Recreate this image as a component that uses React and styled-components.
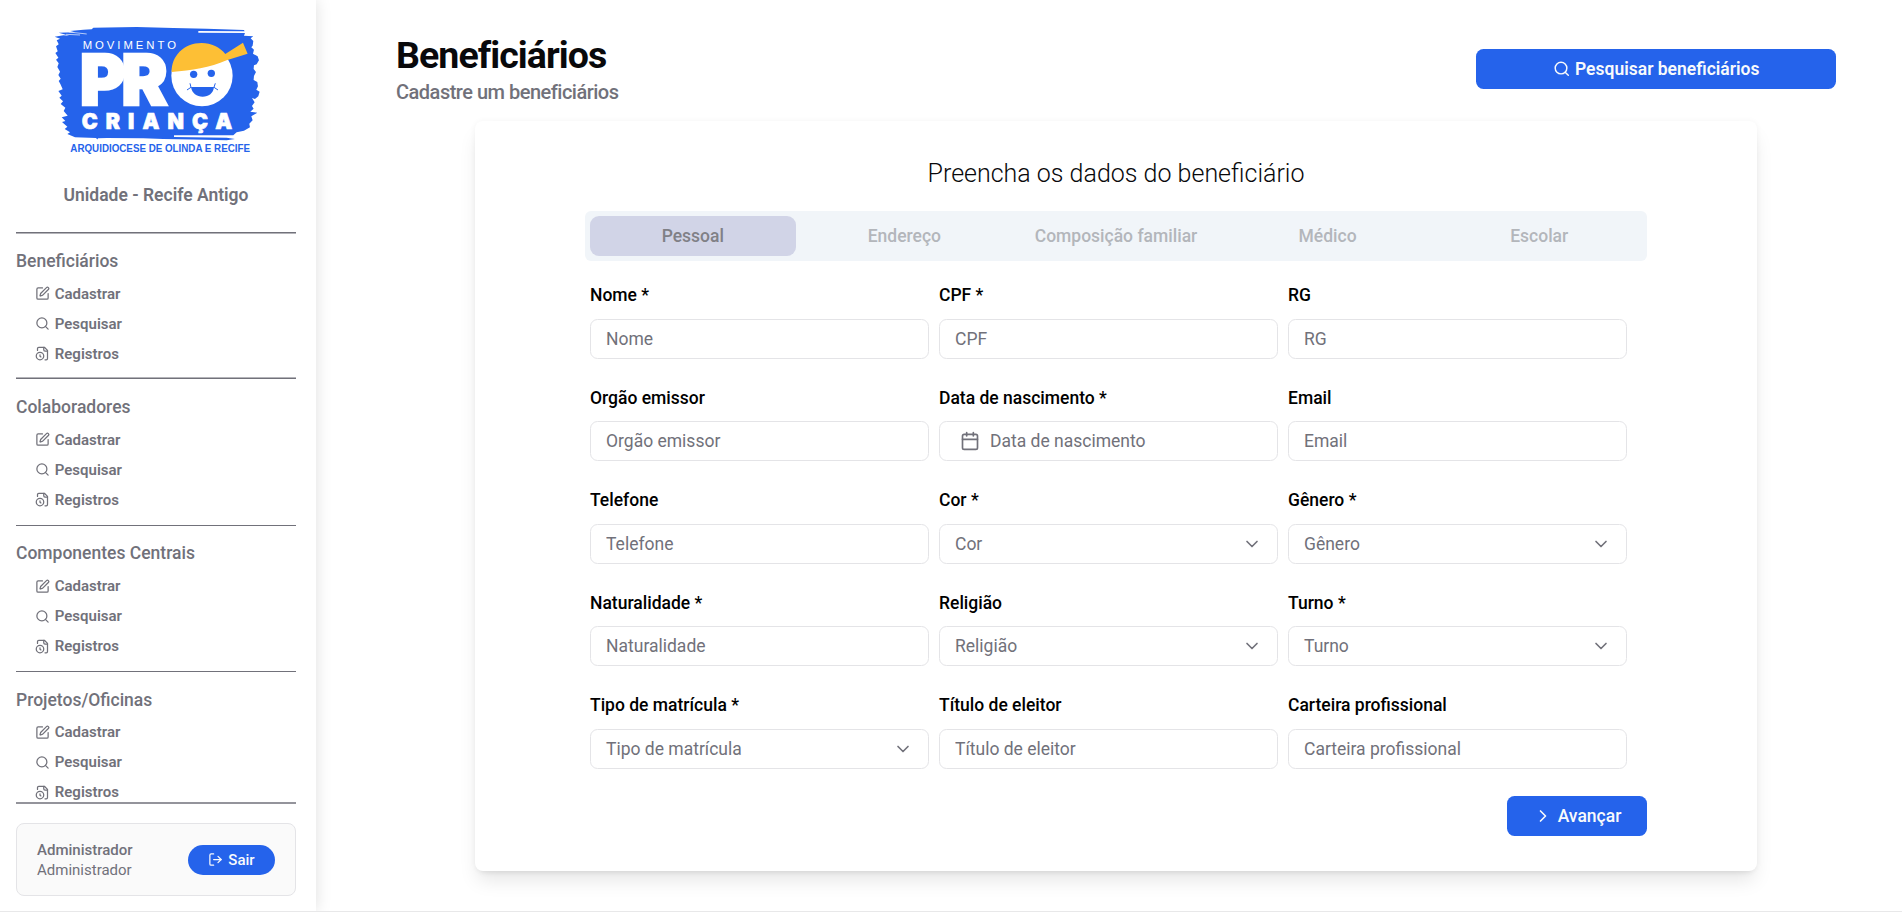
import React from "react";
import styled, { createGlobalStyle, css } from "styled-components";
import { SquarePen, Search, LogOut, Calendar, ChevronDown, ChevronRight } from "lucide-react";

const GlobalStyle = createGlobalStyle`
  * { box-sizing: border-box; }
  html, body { height: 100%; overflow: hidden; }
  body { margin: 0; background: #fff; color: #09090b; font-family: Roboto, "Liberation Sans", sans-serif; }
  button, input { font-family: inherit; }
  h1, h2, p { margin: 0; }
`;

const Page = styled.div`
  display: flex;
  height: 912px;
  border-bottom: 1px solid #e8e8e9;
`;

const Sidebar = styled.aside`
  display: flex;
  flex-direction: column;
  flex: none;
  width: 316px;
  padding: 15px 20px 15px 16px;
  color: #71717a;
  box-shadow: 0 0 15px rgba(0, 0, 0, 0.13);
  clip-path: inset(0 -30px 0 0);
`;

const LogoSvg = styled.svg`
  display: block;
  width: 240px;
  height: 140px;
  margin-left: 24px;
`;

const Unit = styled.p`
  margin-top: 26px;
  line-height: 28px;
  font-size: 17.5px;
  font-weight: 600;
  text-align: center;
`;

const Nav = styled.nav`
  display: flex;
  flex-direction: column;
  height: 572px;
  margin-top: 23.25px;
  overflow: hidden;
  border-bottom: 2px solid #94949b;
`;

const NavSection = styled.section`
  flex: none;
  height: 146.25px;
  padding-top: 12.75px;
  border-top: 1px solid #71717a;
  &:nth-child(1) { box-shadow: inset 0 1px #b4b4b9; }
  &:nth-child(2) { box-shadow: 0 -1px #b4b4b9; }
`;

const NavTitle = styled.h2`
  line-height: 30px;
  margin-bottom: 2.75px;
  font-size: 17.5px;
  font-weight: 500;
`;

const NavItem = styled.a`
  display: flex;
  align-items: center;
  gap: 4.5px;
  height: 30px;
  padding-left: 19.25px;
  font-size: 15px;
  font-weight: 600;
`;

const UserCard = styled.div`
  display: flex;
  align-items: center;
  justify-content: space-between;
  flex: none;
  height: 73px;
  margin-top: 19px;
  padding: 0 20px;
  border: 1px solid #e4e4e7;
  border-radius: 8px;
  background: #fafafa;
  font-size: 15px;
  line-height: 20px;
`;

const UserName = styled.div`
  font-weight: 500;
`;

const Button = styled.button`
  display: flex;
  align-items: center;
  justify-content: center;
  padding: 0;
  border: 0;
  border-radius: 7.5px;
  color: #f8fafc;
  background: #2563eb;
  height: 40px;
  font-size: 17.5px;
  font-weight: 500;
  ${(p) => p.$kind === "search" && css`width: 360px; gap: 5px; font-weight: 600;`}
  ${(p) => p.$kind === "next" && css`width: 140px; gap: 5px; align-self: flex-end; margin-top: 26px;`}
  ${(p) => p.$kind === "logout" && css`width: 87px; height: 30px; gap: 5px; border-radius: 15px; font-size: 15px;`}
`;

const Main = styled.main`
  flex: 1;
  display: flex;
  flex-direction: column;
  padding: 34px 66px 0 80px;
`;

const Header = styled.header`
  display: flex;
  align-items: center;
  justify-content: space-between;
  height: 70px;
`;

const Heading = styled.div`
  padding-top: 3px;
`;

const Title = styled.h1`
  line-height: 40px;
  font-size: 37.5px;
  font-weight: 700;
  letter-spacing: -0.025em;
`;

const Subtitle = styled.p`
  line-height: 30px;
  margin-top: 2px;
  font-size: 20px;
  font-weight: 500;
  letter-spacing: -0.025em;
  color: #71717a;
`;

const Card = styled.section`
  display: flex;
  flex-direction: column;
  flex: none;
  width: 1282px;
  height: 750.5px;
  margin: 16.5px 0 0 79px;
  padding: 36px 110px 0;
  border-radius: 8px;
  background: #fff;
  box-shadow: 0 12.5px 18.75px -3.75px rgba(0, 0, 0, 0.1), 0 5px 7.5px -5px rgba(0, 0, 0, 0.1), 0 0 6px rgba(0, 0, 0, 0.045);
`;

const CardTitle = styled.h2`
  line-height: 34px;
  font-size: 25px;
  font-weight: 300;
  text-align: center;
`;

const Tabs = styled.div`
  display: grid;
  grid-template-columns: repeat(5, 1fr);
  gap: 6px;
  height: 50px;
  margin-top: 20.5px;
  padding: 5px;
  border-radius: 6px;
  background: #f1f5f9;
`;

const Tab = styled.button`
  padding: 0;
  border: 0;
  border-radius: 9px;
  font-size: 17.5px;
  font-weight: 500;
  color: ${(p) => (p.$active ? "#808086" : "#b3b6bb")};
  background: ${(p) => (p.$active ? "#d1d4e7" : "transparent")};
`;

const Fields = styled.div`
  display: grid;
  grid-template-columns: repeat(3, 339px);
  column-gap: 10px;
  row-gap: 22.5px;
  margin: 19px 0 0 5px;
`;

const Field = styled.label`
  display: flex;
  flex-direction: column;
  gap: 8.5px;
  height: 80px;
`;

const FieldLabel = styled.span`
  line-height: 30px;
  font-size: 17.5px;
  font-weight: 500;
  color: #000;
`;

const Control = styled.span`
  display: flex;
  align-items: center;
  justify-content: space-between;
  flex: none;
  height: 40px;
  padding: 0 15px;
  border: 1px solid #e4e4e7;
  border-radius: 7.5px;
  font-size: 17.5px;
  color: #71717a;
  ${(p) => p.$date && css`justify-content: flex-start; gap: 10px; padding-left: 20px;`}
`;

const Input = styled.input`
  width: 100%;
  padding: 0;
  border: 0;
  outline: 0;
  background: transparent;
  font-size: 17.5px;
  &::placeholder { color: #71717a; opacity: 1; }
`;

const FileClock = () => (
  <svg width="15" height="15" viewBox="0 0 24 24" fill="none" stroke="currentColor" strokeWidth="2" strokeLinecap="round" strokeLinejoin="round">
    <path d="M16 22h2a2 2 0 0 0 2-2V7l-5-5H6a2 2 0 0 0-2 2v3" />
    <path d="M14 2v4a2 2 0 0 0 2 2h4" />
    <circle cx="8" cy="16" r="6" />
    <path d="M9.5 17.5 8 16.25V14" />
  </svg>
);

const Logo = () => (
  <LogoSvg viewBox="0 0 720 420" fontFamily="Liberation Sans, Arial, sans-serif">
    <path
      fill="#2563eb"
      d="M44 65 70 61 88 62 56 53 105 52 90 48 130 44 155 43 160 38 290 36 400 39 500 41 612 45 614 49 475 48 475 53 615 54 612 62 640 64 632 70 640 78 638 92 634 97 642 104 639 116 653 124 657 136 650 148 642 151 641 162 648 171 642 183 641 195 652 201 654 214 649 224 659 230 655 244 645 252 636 249 644 262 636 273 641 281 631 290 652 293 634 304 638 316 628 326 630 337 612 347 590 352 580 361 402 361 402 366 560 368 585 372 560 376 460 374 370 372 310 370 200 369 174 370 172 374 168 369 105 367 82 357 90 352 74 342 82 335 66 321 76 318 65 307 83 302 71 288 76 278 62 267 69 259 58 248 65 242 55 228 68 223 61 207 56 198 62 191 55 180 60 170 52 156 56 145 48 134 55 128 46 114 53 109 48 94 56 88 50 76 60 71Z"
    />
    <path stroke="#fff" strokeWidth="2" d="M78 58 120 60M86 51 140 57" />
    <g fill="#fff">
      <text x="128" y="102" fontSize="34" textLength="280" lengthAdjust="spacing">MOVIMENTO</text>
      <g fontFamily="Inter, Liberation Sans, sans-serif" fontWeight="900" stroke="#fff">
        <text x="119 244" y="270" fontSize="209" strokeWidth="7">PR</text>
        <text x="125" y="341" fontSize="64" strokeWidth="2" textLength="452" lengthAdjust="spacing">CRIANÇA</text>
      </g>
      <circle cx="486" cy="182" r="92" />
    </g>
    <path fill="#fdbf35" d="M395 171C394 124 431 84 485 84 514 84 540 97 556 117L609 83 623 116 560 136C510 158 455 167 395 171Z" />
    <g fill="#2563eb">
      <circle cx="461" cy="178" r="11" />
      <circle cx="514" cy="175" r="11" />
      <path d="M453 216H522C520 235 506 245 488 245S456 235 453 216Z" />
      <path fill="none" stroke="#2563eb" strokeWidth="3" d="M441 225 453 217 450 205M534 225 522 217 526 205" />
      <text x="91" y="411" fontSize="30" fontWeight="700" textLength="539" lengthAdjust="spacingAndGlyphs">ARQUIDIOCESE DE OLINDA E RECIFE</text>
    </g>
  </LogoSvg>
);

const sections = ["Beneficiários", "Colaboradores", "Componentes Centrais", "Projetos/Oficinas"];
const tabs = ["Pessoal", "Endereço", "Composição familiar", "Médico", "Escolar"];
const fields = [
  { name: "Nome", required: true },
  { name: "CPF", required: true },
  { name: "RG" },
  { name: "Orgão emissor" },
  { name: "Data de nascimento", required: true, type: "date" },
  { name: "Email" },
  { name: "Telefone" },
  { name: "Cor", required: true, type: "select" },
  { name: "Gênero", required: true, type: "select" },
  { name: "Naturalidade", required: true },
  { name: "Religião", type: "select" },
  { name: "Turno", required: true, type: "select" },
  { name: "Tipo de matrícula", required: true, type: "select" },
  { name: "Título de eleitor" },
  { name: "Carteira profissional" },
];

const FormField = ({ name, required, type }) => (
  <Field>
    <FieldLabel>{name}{required && " *"}</FieldLabel>
    <Control $date={type === "date"}>
      {type === "date" && <><Calendar size={20} strokeWidth={2} />{name}</>}
      {type === "select" && <>{name}<ChevronDown size={20} strokeWidth={2} /></>}
      {!type && <Input placeholder={name} />}
    </Control>
  </Field>
);

export default function App() {
  return (
    <>
      <GlobalStyle />
      <Page>
        <Sidebar>
          <Logo />
          <Unit>Unidade - Recife Antigo</Unit>
          <Nav>
            {sections.map((s) => (
              <NavSection key={s}>
                <NavTitle>{s}</NavTitle>
                <NavItem><SquarePen size={15} strokeWidth={2} />Cadastrar</NavItem>
                <NavItem><Search size={15} strokeWidth={2} />Pesquisar</NavItem>
                <NavItem><FileClock />Registros</NavItem>
              </NavSection>
            ))}
          </Nav>
          <UserCard>
            <div>
              <UserName>Administrador</UserName>
              <div>Administrador</div>
            </div>
            <Button $kind="logout"><LogOut size={15} strokeWidth={2} />Sair</Button>
          </UserCard>
        </Sidebar>
        <Main>
          <Header>
            <Heading>
              <Title>Beneficiários</Title>
              <Subtitle>Cadastre um beneficiários</Subtitle>
            </Heading>
            <Button $kind="search"><Search size={17.5} strokeWidth={2} />Pesquisar beneficiários</Button>
          </Header>
          <Card>
            <CardTitle>Preencha os dados do beneficiário</CardTitle>
            <Tabs>
              {tabs.map((t, i) => <Tab key={t} $active={i === 0}>{t}</Tab>)}
            </Tabs>
            <Fields>
              {fields.map((f) => <FormField key={f.name} {...f} />)}
            </Fields>
            <Button $kind="next"><ChevronRight size={20} strokeWidth={2} />Avançar</Button>
          </Card>
        </Main>
      </Page>
    </>
  );
}
